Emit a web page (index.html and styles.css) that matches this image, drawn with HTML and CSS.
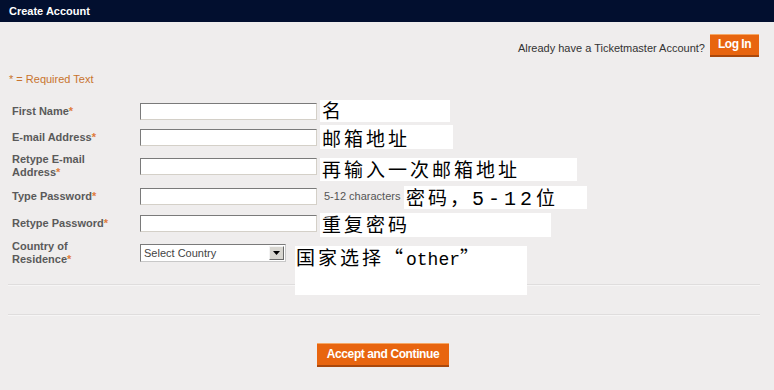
FILE: index.html
```html
<!DOCTYPE html>
<html lang="en">
<head>
    <meta charset="UTF-8">
    <meta name="viewport" content="width=device-width, initial-scale=1.0">
    <title>Create Account</title>
    <link rel="stylesheet" href="styles.css">
</head>
<body>
    <div class="header">Create Account</div>

    <div class="content">
        <div class="login-row">
            <span class="login-text">Already have a Ticketmaster Account?</span>
            <button class="btn btn-login">Log In</button>
        </div>

        <div class="required-note">* = Required Text</div>

        <div class="form">
            <div class="row row-1">
                <label class="label">First Name<span class="req">*</span></label>
                <input class="field" type="text">
                <div class="note note-1">名</div>
            </div>
            <div class="row row-2">
                <label class="label">E-mail Address<span class="req">*</span></label>
                <input class="field" type="text">
                <div class="note note-2">邮箱地址</div>
            </div>
            <div class="row row-3">
                <label class="label">Retype E-mail<br>Address<span class="req">*</span></label>
                <input class="field" type="text">
                <div class="note note-3">再输入一次邮箱地址</div>
            </div>
            <div class="row row-4">
                <label class="label">Type Password<span class="req">*</span></label>
                <input class="field" type="password">
                <span class="hint">5-12 characters</span>
                <div class="note note-4">密码，<span class="mono mono-num">5-12</span>位</div>
            </div>
            <div class="row row-5">
                <label class="label">Retype Password<span class="req">*</span></label>
                <input class="field" type="password">
                <div class="note note-5">重复密码</div>
            </div>
            <div class="row row-6">
                <label class="label">Country of<br>Residence<span class="req">*</span></label>
                <div class="select">
                    <span class="select-text">Select Country</span>
                    <span class="select-arrow">
                        <svg width="7" height="4" viewBox="0 0 7 4"><path d="M0 0h7L3.5 4z" fill="#000"/></svg>
                    </span>
                </div>
                <div class="note note-6">国家选择“<span class="mono">other</span>”</div>
            </div>
        </div>

        <div class="divider divider-1"></div>
        <div class="divider divider-2"></div>

        <div class="actions">
            <button class="btn btn-accept">Accept and Continue</button>
        </div>
    </div>
</body>
</html>
```

FILE: styles.css
```css
body {
    margin: 0;
    background: #efeded;
    font-family: "Liberation Sans", Arial, sans-serif;
    font-size: 11px;
    color: #333333;
}

.header {
    height: 22px;
    line-height: 22px;
    padding-left: 9px;
    background: #020f2f;
    color: #ffffff;
    font-weight: bold;
    font-size: 11px;
}

.content {
    padding: 0 9px;
}

.login-row {
    display: flex;
    justify-content: flex-end;
    align-items: center;
    margin-top: 12px;
    padding-right: 6px;
    height: 23px;
}

.login-text {
    color: #333333;
    margin-right: 5px;
    padding-top: 4px;
}

.btn {
    border: 0;
    margin: 0;
    cursor: pointer;
    color: #ffffff;
    font-family: "Liberation Sans", Arial, sans-serif;
    font-weight: bold;
    background: #e8650f;
    border-top: 1px solid #f6a865;
    border-bottom: 2px solid #a9480c;
    padding: 0;
}

.btn-login {
    width: 49px;
    height: 23px;
    font-size: 12px;
    letter-spacing: -0.5px;
    padding-bottom: 3px;
}

.required-note {
    margin-top: 16px;
    line-height: 13px;
    color: #c8742e;
}

.form {
    margin-top: 12px;
    padding-left: 3px;
}

.row {
    display: flex;
    align-items: center;
}

.row-1 { height: 26px; }
.row-2 { height: 26px; }
.row-3 { height: 32px; }
.row-4 { height: 28px; }
.row-5 { height: 26px; }
.row-6 { height: 34px; align-items: flex-start; }

.label {
    width: 128px;
    font-weight: bold;
    color: #5a5a5a;
    line-height: 13px;
}

.row-6 .label {
    padding-top: 4px;
}

.req {
    color: #e07b3a;
}

.field {
    box-sizing: border-box;
    width: 177px;
    height: 17px;
    margin: 0;
    background: #ffffff;
    border: 1px solid;
    border-color: #7a7a7a #d4d0c8 #d4d0c8 #7a7a7a;
    padding: 0 2px;
}

.hint {
    margin-left: 7px;
    width: 80px;
    color: #555555;
    white-space: nowrap;
}

.select {
    box-sizing: border-box;
    display: flex;
    align-items: center;
    width: 146px;
    height: 18px;
    margin-top: 8px;
    background: #ffffff;
    border: 1px solid;
    border-color: #7a7a7a #c8c8c8 #c8c8c8 #7a7a7a;
}

.select-text {
    flex: 1;
    padding-left: 3px;
    color: #444444;
}

.select-arrow {
    box-sizing: border-box;
    display: flex;
    align-items: center;
    justify-content: center;
    width: 15px;
    height: 14px;
    margin-right: 1px;
    background: #d8d6d0;
    border: 1px solid;
    border-color: #f4f4f4 #6a6a6a #6a6a6a #f4f4f4;
}

.note {
    box-sizing: border-box;
    background: #ffffff;
    color: #000000;
    font-family: "Noto Sans CJK SC", sans-serif;
    font-size: 19px;
    letter-spacing: 3px;
    line-height: 22px;
    padding-left: 2px;
    white-space: nowrap;
}

.mono {
    font-family: "Liberation Mono", monospace;
    font-size: 18px;
    letter-spacing: 0;
}

.mono-num {
    font-size: 20px;
    letter-spacing: 4px;
}

.note-1 { margin-left: 3px; width: 130px; height: 22px; line-height: 20px; }
.note-2 { margin-left: 3px; width: 133px; height: 24px; padding-top: 2px; }
.note-3 { margin-left: 3px; width: 257px; height: 23px; margin-top: 6px; }
.note-4 { width: 183px; height: 23px; margin-top: 2px; }
.note-5 { margin-left: 3px; width: 231px; height: 24px; margin-top: 4px; }
.note-6 { margin-left: 9px; width: 232px; height: 49px; margin-top: 10px; padding-left: 1px; }

.divider {
    height: 0;
    margin: 0 5px 0 -1px;
    border-top: 1px solid #dfdddd;
    border-bottom: 1px solid #f6f5f5;
}

.divider-1 { margin-top: 14px; }
.divider-2 { margin-top: 28px; }

.actions {
    display: flex;
    justify-content: center;
    margin-top: 27px;
    padding-right: 8px;
}

.btn-accept {
    width: 132px;
    height: 24px;
    font-size: 12px;
    letter-spacing: -0.4px;
    padding-bottom: 2px;
}
```
